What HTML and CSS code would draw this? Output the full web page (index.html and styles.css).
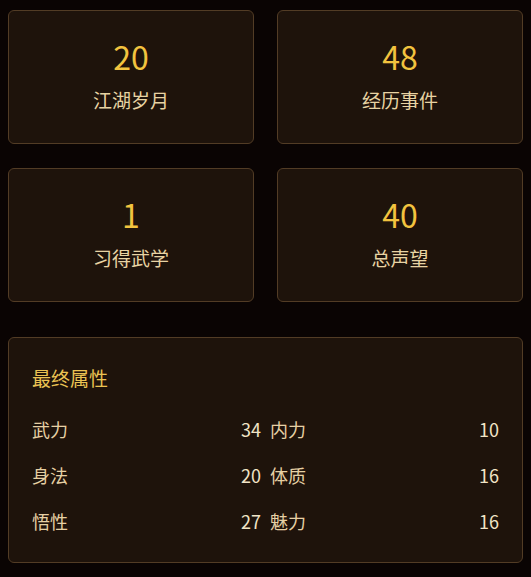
FILE: index.html
```html
<!DOCTYPE html>
<html lang="zh">
<head>
<meta charset="utf-8">
<link rel="stylesheet" href="styles.css">
</head>
<body>
<div class="page">
  <div class="stats">
    <div class="card"><div class="num">20</div><div class="label">江湖岁月</div></div>
    <div class="card"><div class="num">48</div><div class="label">经历事件</div></div>
    <div class="card"><div class="num">1</div><div class="label">习得武学</div></div>
    <div class="card"><div class="num">40</div><div class="label">总声望</div></div>
  </div>
  <div class="panel">
    <div class="title">最终属性</div>
    <div class="attrs">
      <div class="attr"><span class="k">武力</span><span class="v">34</span></div>
      <div class="attr"><span class="k">内力</span><span class="v">10</span></div>
      <div class="attr"><span class="k">身法</span><span class="v">20</span></div>
      <div class="attr"><span class="k">体质</span><span class="v">16</span></div>
      <div class="attr"><span class="k">悟性</span><span class="v">27</span></div>
      <div class="attr"><span class="k">魅力</span><span class="v">16</span></div>
    </div>
  </div>
</div>
</body>
</html>
```
FILE: styles.css
```css
html, body {
  margin: 0;
  padding: 0;
  background: #0a0403;
}
body {
  font-family: "Noto Sans CJK SC", "Noto Sans", sans-serif;
}
.page {
  padding: 10px 8px 0 8px;
}
.stats {
  display: grid;
  grid-template-columns: 1fr 1fr;
  column-gap: 23px;
  row-gap: 24px;
}
.card {
  height: 134px;
  box-sizing: border-box;
  background: #1e130b;
  border: 1px solid #523c25;
  border-radius: 6px;
  display: flex;
  flex-direction: column;
  align-items: center;
  justify-content: center;
}
.num {
  color: #f2c33f;
  font-size: 32px;
  line-height: 36px;
  margin-top: -4px;
}
.label {
  color: #e8d3a3;
  font-size: 19px;
  line-height: 26px;
  margin-top: 13px;
}
.panel {
  margin-top: 35px;
  height: 226px;
  box-sizing: border-box;
  background: #1e130b;
  border: 1px solid #523c25;
  border-radius: 6px;
  padding: 26px 23px 0 23px;
}
.title {
  color: #ebc353;
  font-size: 19px;
  line-height: 28px;
}
.attrs {
  margin-top: 24px;
  display: grid;
  grid-template-columns: 1fr 1fr;
  column-gap: 9px;
  row-gap: 20px;
}
.attr {
  display: flex;
  justify-content: space-between;
  font-size: 18px;
  line-height: 26px;
}
.k {
  color: #e6d0a4;
}
.v {
  color: #f1e4c6;
}
```
